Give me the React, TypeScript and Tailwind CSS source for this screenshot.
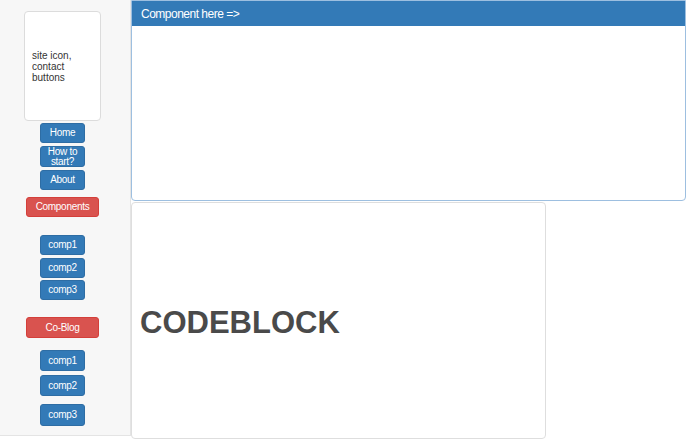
import React from 'react';

const blueBtn =
    'w-[45px] h-[20px] flex items-center justify-center rounded-[3px] bg-[#337ab7] border border-[#2e6da4] text-white text-[10px] leading-[10px] tracking-[-0.3px] text-center';
const redBtn =
    'w-[73px] h-[21px] flex items-center justify-center rounded-[3px] bg-[#d9534f] border border-[#d43f3a] text-white text-[10px] leading-[10px] tracking-[-0.3px]';

const App = () => {
    return (
        <div className="w-[689px] h-[439px] bg-white flex font-['Liberation_Sans',Arial,sans-serif] overflow-hidden">
            {/* sidebar */}
            <div className="w-[131px] h-[436px] bg-[#f7f7f7] border-r border-b border-[#e4e4e4] flex flex-col items-center pr-[5px] shrink-0">
                <div className="mt-[11px] w-[77px] h-[110px] bg-white border border-[#dcdcdc] rounded-[4px] flex items-center pl-[7px] text-[10px] leading-[11px] text-[#333]">
                    <p>site icon,<br />contact<br />buttons</p>
                </div>
                <div className={`${blueBtn} mt-[2px]`}>Home</div>
                <div className={`${blueBtn} !h-[21px] mt-[3px]`}>How to<br />start?</div>
                <div className={`${blueBtn} mt-[3px]`}>About</div>
                <div className={`${redBtn} !h-[20px] mt-[7px]`}>Components</div>
                <div className={`${blueBtn} mt-[18px]`}>comp1</div>
                <div className={`${blueBtn} mt-[3px]`}>comp2</div>
                <div className={`${blueBtn} mt-[2px]`}>comp3</div>
                <div className={`${redBtn} mt-[17px]`}>Co-Blog</div>
                <div className={`${blueBtn} !h-[21px] mt-[12px]`}>comp1</div>
                <div className={`${blueBtn} !h-[21px] mt-[4px]`}>comp2</div>
                <div className={`${blueBtn} !h-[22px] mt-[8px]`}>comp3</div>
            </div>

            {/* main */}
            <div className="flex flex-col">
                <div className="w-[555px] h-[201px] border border-[#9dbfe0] rounded-b-[4px] overflow-hidden">
                    <div className="h-[25px] bg-[#337ab7] flex items-center pl-[9px] text-white text-[12px] tracking-[-0.5px]">
                        Component here =&gt;
                    </div>
                </div>
                <div className="mt-[1px] w-[415px] h-[237px] border border-[#dedede] rounded-[4px] flex items-center pl-[8px] pt-[5px]">
                    <h1 className="text-[31px] font-bold text-[#4a4a4a]">CODEBLOCK</h1>
                </div>
            </div>
        </div>
    );
};

export default App;
